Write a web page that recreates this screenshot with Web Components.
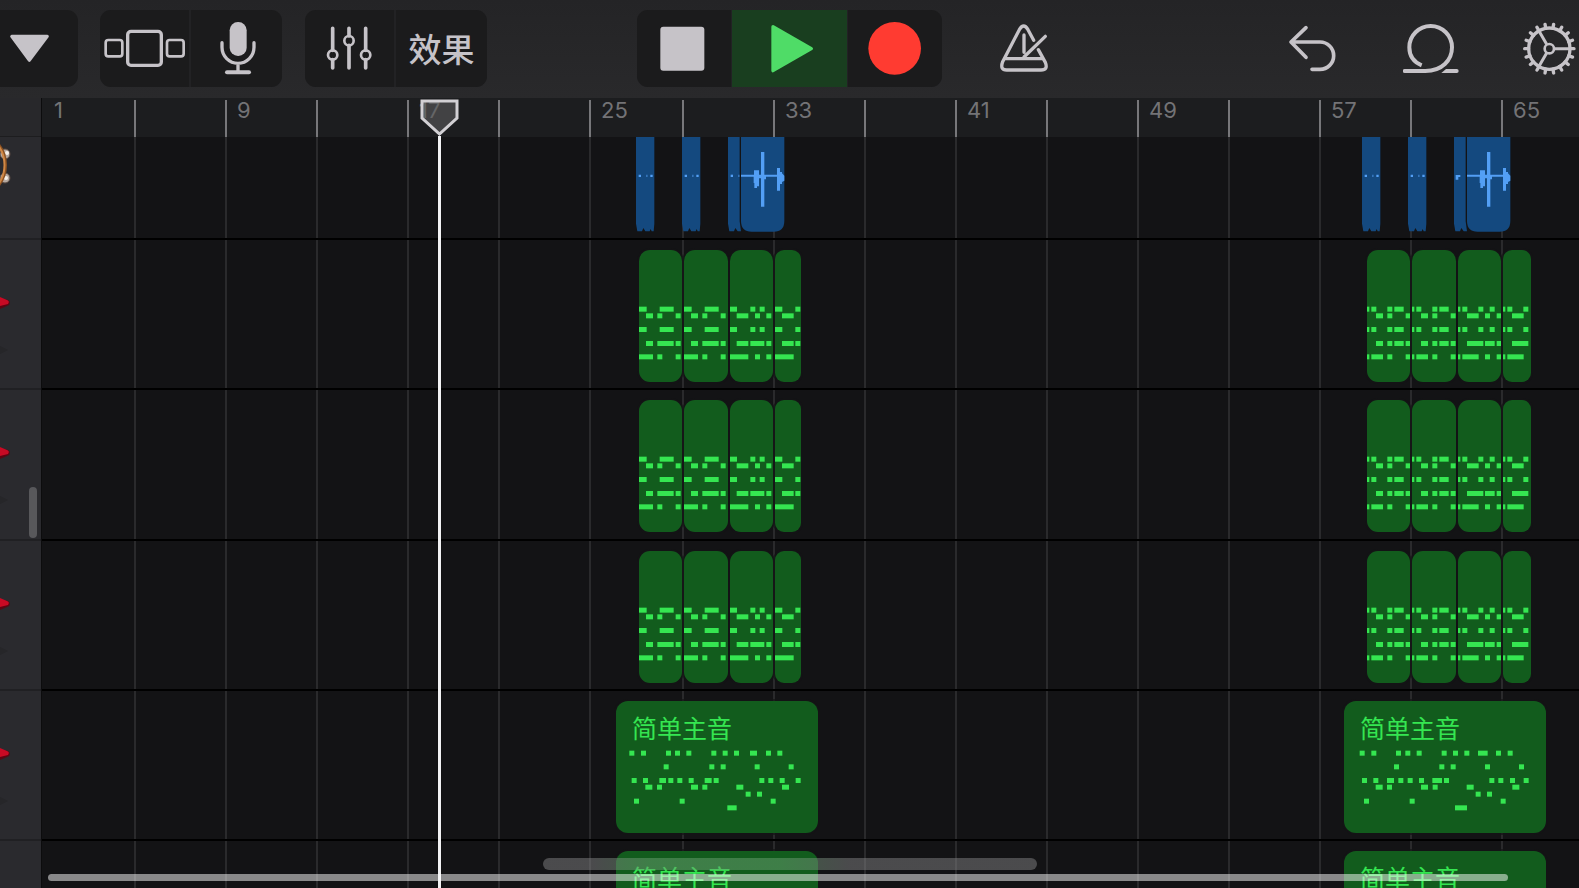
<!DOCTYPE html>
<html lang="zh-CN">
<head>
<meta charset="utf-8">
<title>Tracks</title>
<style>
html,body{margin:0;height:100%;background:#131315}
body{font-family:Inter,"Noto Sans CJK SC",sans-serif;overflow:hidden}
</style>
</head>
<body>
<studio-app></studio-app>
<script>
const define = (name, html, after) => customElements.define(name, class extends HTMLElement {
  connectedCallback() {
    if (this.shadowRoot) return;
    const t = document.createElement('template');
    t.innerHTML = typeof html === 'function' ? html(this) : html;
    this.attachShadow({mode: 'open'}).append(t.content.cloneNode(true));
    if (after) after(this);
  }
});

/* ---------- toolbar icons ---------- */
const teeth = Array.from({length: 18}, (_, i) => {
  const a = i * Math.PI / 9, c = Math.cos(a), s = Math.sin(a);
  return `M${838 + 62 * c} ${147 + 62 * s}L${838 + 74 * c} ${147 + 74 * s}`;
}).join('');
const icons = {
  menu: ['0 31 234 231', '<path d="M35 110H142L88 182Z" fill="currentColor" stroke-width="9"/>'],
  browser: ['300 31 267 231', '<rect x="317" y="121" width="50" height="49" rx="8" stroke-width="8"/><rect x="383" y="95" width="101" height="102" rx="10" stroke-width="10"/><rect x="501" y="121" width="50" height="49" rx="8" stroke-width="8"/>'],
  mic: ['573 31 273 231', '<rect x="689" y="67" width="51" height="102" rx="25" fill="currentColor" stroke="none"/><path d="M666 129v14a48 48 0 0 0 96 0v-14M714 191v24" stroke-width="10"/><path d="M681 218H747" stroke-width="12"/>'],
  mixer: ['915 31 267 231', '<path d="M998 86V152M998 180V205M1047 86V109M1047 137V205M1097 86V152M1097 180V205" stroke-width="11"/><g stroke-width="8"><circle cx="998" cy="166" r="14"/><circle cx="1047" cy="123" r="14"/><circle cx="1097" cy="166" r="14"/></g>'],
  stop: ['51 31 282 231', '<rect x="121" y="81" width="132" height="132" rx="9" fill="currentColor" stroke="none"/>'],
  play: ['336 31 345 231', '<path d="M459 81L574 147L459 213Z" fill="#4fdc67" stroke="#4fdc67" stroke-width="10"/>'],
  record: ['684 31 282 231', '<circle cx="824" cy="146" r="79" fill="#ff3b31" stroke="none"/>'],
  metronome: ['1125 31 174 231', '<g stroke-width="10"><path d="M1241 122L1224 90Q1211 68 1198 90L1148 186Q1139 211 1160 211H1263Q1285 211 1276 188L1255 150"/><path d="M1157 177H1267"/><path d="M1212 106V158M1276 110L1212 172"/></g>'],
  undo: ['45 31 174 231', '<path d="M108 84L63 127L108 173M67 127H150a41 41 0 0 1 0 82H126" stroke-width="11"/>'],
  loop: ['399 31 174 231', '<path d="M455 197C430 187 418 166 418 143A64 64 0 0 1 546 143C546 182 516 214 466 214H404" stroke-width="12" stroke-linecap="butt"/><path d="M404 214H420M540 214H560" stroke-width="12"/><path d="M514 220L528 208H545V220Z" fill="currentColor" stroke="none"/>'],
  gear: ['753 31 174 231', `<path d="${teeth}" stroke-width="10"/><circle cx="838" cy="147" r="62" stroke-width="10"/><circle cx="838" cy="147" r="14" stroke-width="8"/><path d="M853 147H899M830 134L807 94M830 160L807 200" stroke-width="9" stroke-linecap="butt"/>`]
};

define('tool-button', el => {
  const icon = icons[el.getAttribute('icon')];
  return `<style>
  :host{display:block;height:77px;width:var(--w,58px);background:var(--key,transparent)}
  button{all:unset;display:flex;box-sizing:border-box;width:100%;height:100%;align-items:center;justify-content:center;color:#c6c3c8;
    font:500 33px/40px "Noto Sans CJK SC",sans-serif;cursor:pointer}
  button.text{padding-bottom:2px}
  svg{display:block;width:100%;height:100%;fill:none;stroke:currentColor;stroke-linecap:round;stroke-linejoin:round}
  </style><button type="button" ${icon ? '' : 'class="text"'} aria-label="${el.getAttribute('label') || ''}">${icon ? `<svg viewBox="${icon[0]}" aria-hidden="true">${icon[1]}</svg>` : '<slot></slot>'}</button>`;
});

define('button-group', `<style>
  :host{display:flex;gap:var(--gap,2px);border-radius:var(--r,11px);overflow:hidden;--key:#1b1b1c;background:#222224}
  </style><slot></slot>`);

define('tool-bar', `<style>
  :host{display:grid;grid-template-columns:1fr auto 1fr;height:98px;box-sizing:border-box;padding-top:10px;
    align-items:start;background:linear-gradient(#242426,#29292b)}
  .left{display:flex;gap:23px}
  .left button-group:first-child{--r:0 11px 11px 0;margin-right:-1px}
  .transport{--gap:1px}
  .right{display:flex;gap:60px;padding-left:53px}
  .right tool-button:first-child{margin-right:auto}
  </style>
  <div class="left">
    <button-group><tool-button icon="menu" label="菜单" style="--w:78px"></tool-button></button-group>
    <button-group><tool-button icon="browser" label="浏览器" style="--w:89px"></tool-button><tool-button icon="mic" label="乐器" style="--w:91px"></tool-button></button-group>
    <button-group><tool-button icon="mixer" label="轨道控制" style="--w:89px"></tool-button><tool-button label="效果" style="--w:91px">效果</tool-button></button-group>
  </div>
  <button-group class="transport">
    <tool-button icon="stop" label="停止" style="--w:94px"></tool-button>
    <tool-button icon="play" label="播放" style="--w:115px;--key:#193e1f"></tool-button>
    <tool-button icon="record" label="录音" style="--w:94px"></tool-button>
  </button-group>
  <div class="right">
    <tool-button icon="metronome" label="节拍器"></tool-button>
    <tool-button icon="undo" label="撤销"></tool-button>
    <tool-button icon="loop" label="循环"></tool-button>
    <tool-button icon="gear" label="设置"></tool-button>
  </div>`);

/* ---------- ruler and grid ---------- */
const columns = '92px repeat(5,91px) 93px repeat(9,91px) 1fr';
define('time-ruler', () => `<style>
  :host{display:grid;grid-template-columns:${columns};height:39px;box-sizing:border-box;padding-top:2px;background:#1c1d1f;overflow:hidden}
  span{border-left:2px solid #77777a;padding-left:10px;font-size:22px;line-height:20px;color:#737376;min-width:0}
  span:first-of-type{border-left-color:transparent}
  </style>${Array.from({length: 17}, (_, i) => `<span>${i % 2 ? '' : 1 + i * 4}</span>`).join('')}`);

define('bar-grid', () => `<style>
  :host{display:grid;grid-template-columns:${columns}}
  i{border-left:2px solid #2a2a2c}
  i:first-of-type{border-left-color:transparent}
  </style>${'<i></i>'.repeat(17)}`);

/* ---------- regions: note data is [x, width] per pitch row, at three units per pixel ---------- */
const chord = {
  a: [[[0,23],[62,42]], [[21,21],[55,15],[110,15]], [[0,23],[62,42]], [[21,21],[55,49],[110,15]], [[0,42],[55,15],[110,15]]],
  b: [[[0,21],[61,15],[89,15]], [[20,35],[75,15],[109,15]], [[0,21],[61,15],[89,15]], [[20,35],[61,42],[109,15]], [[0,55],[75,15],[109,15]]],
  c: [[[0,22],[61,15]], [[21,35]], [[0,22],[61,15]], [[21,35],[61,15]], [[0,56]]],
  d: [[[0,7],[13,15],[61,15],[82,28]], [[27,21],[61,15],[116,15]], [[0,7],[13,15],[61,15],[82,28]], [[27,21],[61,15],[82,28],[116,15]], [[0,7],[13,35],[61,15],[116,15]]],
  e: [[[0,7],[13,15],[61,15],[95,15]], [[27,35],[81,15],[116,15]], [[0,7],[13,15],[61,15],[95,15]], [[27,49],[81,29],[116,15]], [[0,7],[13,49],[81,15],[116,15]]],
  f: [[[0,7],[13,15],[61,15]], [[27,35]], [[0,7],[13,15],[61,15]], [[27,49]], [[0,7],[13,49]]]
};
const lead = {
  g: [[40,75,150,177,211,286,320,354,[402,21],450,484], [143,280,314,416,518], [47,81,[130,20],157,184,218,[266,21],293,430,457,491,539], [[88,21],123,[225,21],259,[361,21],[498,21]], [389,423], [54,191,464], [[334,28]]],
  h: [[47,82,156,184,218,293,327,361,[402,29],456,491], [150,286,320,423,525], [54,88,[129,21],163,191,225,[265,29],300,436,463,498,539], [[95,21],129,[231,21],266,[368,21],[505,21]], [395,429], [60,197,470], [[333,36]]]
};
const rects = (rows, tops) => rows.map((r, i) => r.map(n => {
  const [x, w] = Array.isArray(n) ? n : [n, 15];
  return `<rect x="${x}" y="${tops[i]}" width="${w}" height="15"/>`;
}).join('')).join('');

define('midi-region', el => {
  const p = el.getAttribute('notes'), w = +el.getAttribute('length');
  const body = chord[p] ? rects(chord[p], [170,190,231,273,313]) : rects(lead[p], [149,190,231,251,272,293,313]);
  return `<style>
  :host{display:grid;width:${w}px;height:132px;border-radius:${chord[p] ? (w < 40 ? 9 : 11) : 12}px;background:#125c1d;box-shadow:0 0 0 2px #131315aa;color:#35e651;overflow:hidden}
  svg,div{grid-area:1/1}
  svg{display:block;width:${w}px;height:132px;fill:currentColor}
  div{padding:8px 16px;font:400 25px/36px "Noto Sans CJK SC",sans-serif;white-space:nowrap}
  </style><svg viewBox="0 0 ${w * 3} 396" aria-hidden="true">${body}</svg>${chord[p] ? '' : '<div><slot></slot></div>'}`;
});

const strip = 'M0 0H55V262L53 285H47L44 278L41 285H28L22 275L18 285H4L0 262Z';
const audio = {
  hit: [18, `<path fill="#14497f" d="${strip}"/><path d="M8 115h7v7h-7zM43 115h7v7h-7z"/><path opacity=".5" d="M30 115h5v7h-5z"/>`],
  cut: [12, '<path fill="#14497f" d="M0 0H35V255L39 285H29L22 275L18 285H4L0 262Z"/><path d="M8 115h7v7h-7z"/><path opacity=".5" d="M30 115h5v7h-5z"/>'],
  cut2: [12, '<path fill="#14497f" d="M0 0H35V255L39 285H29L22 275L18 285H4L0 262Z"/><path d="M5 116h14v6h-6v8h-8z"/>'],
  tail: [43, '<path fill="#14497f" d="M0 0H130V254Q130 286 98 286H32Q0 286 0 254Z"/><path d="M0 115H39V102H54V115H60V47H70V115H108V95H117V107H123V111L130 118V133L123 137V143H117V163H108V121H75V129H70V211H60V126H54V150H48V155H40V140H38V121H0Z"/>']
};
define('audio-region', el => {
  const [w, body] = audio[el.getAttribute('wave')];
  return `<style>
  :host{display:block;width:${w}px;height:95px}
  svg{display:block;width:${w + 1}px;height:95px;fill:#539ff5}
  </style><svg viewBox="0 2 ${w * 3 + 3} 285" aria-hidden="true">${body}</svg>`;
});

define('region-group', `<style>
  :host{display:flex;gap:2px}
  </style><slot></slot>`);

define('track-lane', `<style>
  :host{display:flex;align-items:flex-start;box-sizing:border-box;height:var(--h,150px);padding-top:10px;border-bottom:2px solid #000;overflow:hidden}
  </style><slot></slot>`);

/* ---------- track headers ---------- */
define('track-header', el => {
  const art = el.getAttribute('art');
  const pics = {
    key: '<path d="M0 58L8 60Q11 62 9 65L0 69Z" fill="#5d0412"/><path d="M0 57L7 60Q10 61 8 64L0 66Z" fill="#c80a24"/><path d="M0 106L8 110L0 114Z" fill="#262629"/>',
    tambourine: '<circle cx="5" cy="17" r="5" fill="#b5aaa2" stroke="#5a4a42"/><circle cx="5" cy="41" r="5" fill="#b5aaa2" stroke="#5a4a42"/><circle cx="7" cy="16" r="2" fill="#f7f1ea"/><circle cx="6" cy="41" r="2" fill="#f7f1ea"/><path d="M-2 7C8 19 8 37 -2 49" fill="none" stroke="#8a5020" stroke-width="3"/><path d="M-3 7C7 19 7 37 -3 49" fill="none" stroke="#d08846" stroke-width="2"/>'
  };
  return `<style>
  :host{display:block;box-sizing:border-box;height:var(--h,150px);border-bottom:2px solid #202023;overflow:hidden}
  svg{display:block;width:42px;height:148px}
  </style>${pics[art] ? `<svg viewBox="0 0 42 148" aria-hidden="true">${pics[art]}</svg>` : ''}`;
});

/* ---------- playhead ---------- */
define('play-head', `<style>
  :host{display:flex;flex-direction:column;align-items:center;width:39px}
  svg{display:block;width:39px;height:37px;flex:none}
  div{width:3px;flex:1;background:#f2f2f4;box-shadow:0 0 1px #000}
  </style><svg viewBox="0 0 39 37" aria-hidden="true"><path d="M2 2H37V19L19.500 35L2 19Z" fill="#5c5c5e" fill-opacity=".6" stroke="#d2d0d4" stroke-width="3"/></svg><div></div>`);

const rows = [103, 150, 151, 150, 150];
const midi = p => p.map(([n, w]) => `<midi-region notes="${n}" length="${w}"></midi-region>`).join('');
const chordLane = h => `<track-lane style="--h:${h}px">
  <region-group class="c1">${midi([['a',43],['a',44],['b',43],['c',26]])}</region-group>
  <region-group class="c2">${midi([['d',43],['d',44],['e',43],['f',28]])}</region-group></track-lane>`;
const leadLane = `<track-lane><midi-region class="l1" notes="g" length="202">简单主音</midi-region><midi-region class="l2" notes="h" length="202">简单主音</midi-region></track-lane>`;

define('studio-app', `<style>
  :host{display:flex;flex-direction:column;height:100vh;overflow:hidden;position:relative}
  main{flex:1;min-height:0;display:grid;grid-template-columns:42px 1fr;position:relative}
  aside{box-sizing:border-box;border-right:1px solid #0c0c0d;background:#2a2a2e;overflow:hidden}
  .corner{height:39px;box-sizing:border-box;background:#28282b;border-bottom:1px solid #1d1d1f}
  section{display:grid;grid-template-rows:39px 1fr;min-width:0;min-height:0;overflow:hidden;background:#131315}
  bar-grid,.lanes{grid-area:2/1;min-width:0;min-height:0;overflow:hidden}
  .lanes{display:flex;flex-direction:column}
  .lanes>*{flex:none}
  .audio{padding-top:0}
  .a1,.a2{gap:28px}
  .a1{margin-left:594px}
  .a2{margin-left:578px}
  .join{display:flex;gap:1px}
  .c1{margin-left:597px}
  .c2{margin-left:566px}
  .l1{margin-left:574px}
  .l2{margin-left:526px}
  midi-region,region-group,audio-region{flex:none}
  play-head{position:absolute;left:420px;top:1px;bottom:0}
  .bar{position:absolute;border-radius:6px}
  .vertical{left:29px;top:389px;width:8px;height:51px;background:#58585b}
  .home{left:50%;bottom:18px;width:494px;height:12px;margin-left:-247px;background:linear-gradient(90deg,#82828480 10%,#6aa07280 22%,#6aa07280 48%,#82828480 62%)}
  .horizontal{left:48px;right:71px;bottom:7px;height:7px;background:#ffffff80}
  </style>
  <tool-bar></tool-bar>
  <main>
    <aside>
      <div class="corner"></div>
      ${rows.map((h, i) => `<track-header style="--h:${h}px" art="${i ? 'key' : 'tambourine'}"></track-header>`).join('')}
    </aside>
    <section>
      <time-ruler></time-ruler>
      <bar-grid></bar-grid>
      <div class="lanes">
        <track-lane class="audio" style="--h:103px">
          <region-group class="a1"><audio-region wave="hit"></audio-region><audio-region wave="hit"></audio-region><div class="join"><audio-region wave="cut"></audio-region><audio-region wave="tail"></audio-region></div></region-group>
          <region-group class="a2"><audio-region wave="hit"></audio-region><audio-region wave="hit"></audio-region><div class="join"><audio-region wave="cut2"></audio-region><audio-region wave="tail"></audio-region></div></region-group>
        </track-lane>
        ${chordLane(150)}${chordLane(151)}${chordLane(150)}${leadLane}${leadLane}
      </div>
    </section>
    <play-head></play-head>
    <div class="bar vertical"></div>
    <div class="bar home"></div>
    <div class="bar horizontal"></div>
  </main>`);
</script>
</body>
</html>
